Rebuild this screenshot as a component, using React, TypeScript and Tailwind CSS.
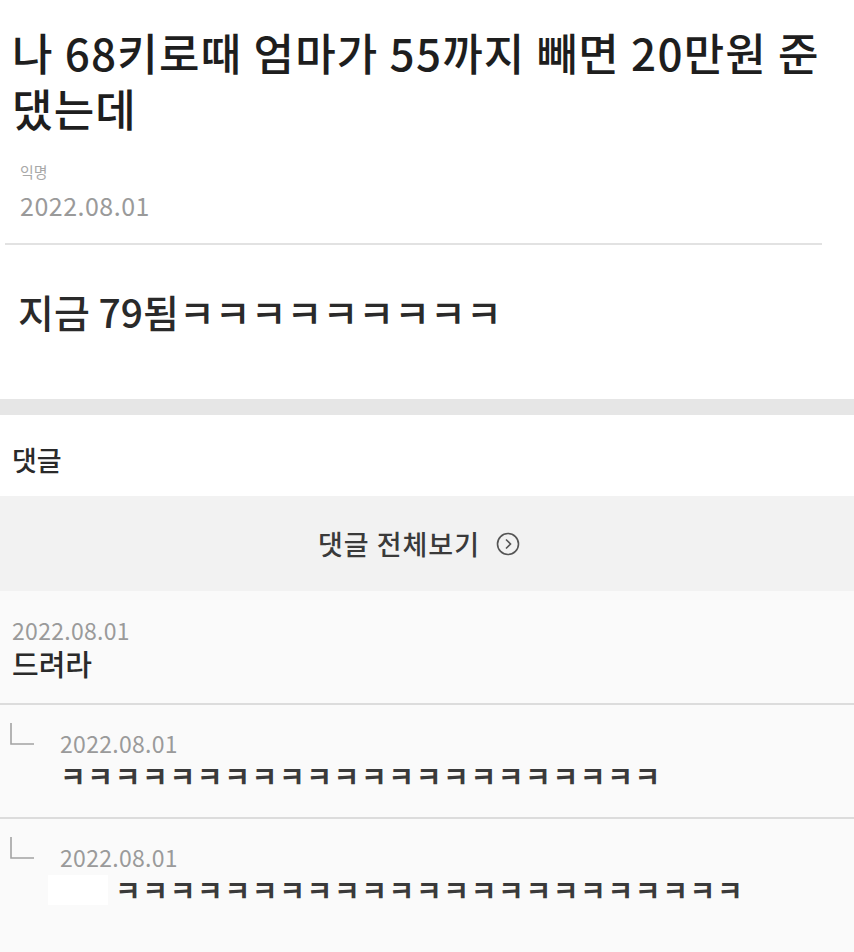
import React from "react";

const font = { fontFamily: '"Noto Sans CJK KR", "Noto Sans", sans-serif' };

function ReplyMark() {
  return (
    <svg width="28" height="28" viewBox="0 0 28 28" className="shrink-0">
      <path d="M3 2 V23 H26" fill="none" stroke="#a3a3a3" strokeWidth="1.6" />
    </svg>
  );
}

function Reply({ text, hidden }: { text: string; hidden?: boolean }) {
  return (
    <div className="flex border-t-2 border-[#dcdcdc] pl-[8px] pt-[16px] pb-[24px]">
      <ReplyMark />
      <div className="ml-[24px] flex flex-col">
        <span className="text-[23px] leading-[32px] text-[#9a9a9a] tracking-[0.3px] mt-[6px]">
          2022.08.01
        </span>
        <div className="flex items-center">
          {hidden && <span className="block w-[60px] h-[30px] bg-white -ml-[12px] mr-[7px]" />}
          <span className="text-[28px] leading-[34px] text-[#3a3a3a] font-bold tracking-[1.6px]">
            {text}
          </span>
        </div>
      </div>
    </div>
  );
}

export default function App() {
  const k = (n: number) => "ㅋ".repeat(n);

  return (
    <div className="w-[854px] min-h-[952px] bg-white" style={font}>
      {/* 글 */}
      <div className="pt-[24px] pl-[12px] pr-[20px]">
        <h1 className="text-[44px] leading-[56px] text-[#1e1e1e] font-medium tracking-[1.2px]">
          나 68키로때 엄마가 55까지 빼면 20만원 준
          <br />
          댔는데
        </h1>
      </div>
      <div className="pl-[20px] mt-[26px] text-[15px] leading-[20px] text-[#a8a8a8]">익명</div>
      <div className="pl-[20px] mt-[9px] text-[25px] leading-[28px] text-[#9a9a9a] tracking-[0.5px]">
        2022.08.01
      </div>
      <div className="ml-[5px] mr-[32px] mt-[24px] h-[2px] bg-[#e2e2e2]" />
      <p className="pl-[18px] mt-[43px] text-[39px] leading-[46px] text-[#2a2a2a] font-medium">
        지금 79됨{k(9)}
      </p>

      <div className="mt-[65px] h-[16px] bg-[#e6e6e6]" />

      {/* 댓글 */}
      <div className="pl-[12px] mt-[28px] text-[27px] leading-[34px] text-[#2a2a2a] font-medium">댓글</div>
      <div className="mt-[19px] h-[95px] bg-[#f2f2f2] flex items-center justify-center gap-[16px] pr-[16px]">
        <span className="text-[27px] leading-[34px] text-[#3a3a3a] font-medium tracking-[1px]">
          댓글 전체보기
        </span>
        <svg width="24" height="24" viewBox="0 0 24 24">
          <circle cx="12" cy="12" r="10.5" fill="none" stroke="#555" strokeWidth="1.6" />
          <path d="M10 7.5 L14.5 12 L10 16.5" fill="none" stroke="#555" strokeWidth="1.6" />
        </svg>
      </div>

      <div className="bg-[#fafafa] pb-[30px]">
        <div className="pl-[12px] pt-[24px] pb-[22px]">
          <div className="text-[23px] leading-[30px] text-[#9a9a9a] tracking-[0.3px]">2022.08.01</div>
          <div className="text-[29px] leading-[36px] text-[#2a2a2a] font-medium">드려라</div>
        </div>
        <Reply text={k(22)} />
        <Reply text={k(23)} hidden />
      </div>
    </div>
  );
}
